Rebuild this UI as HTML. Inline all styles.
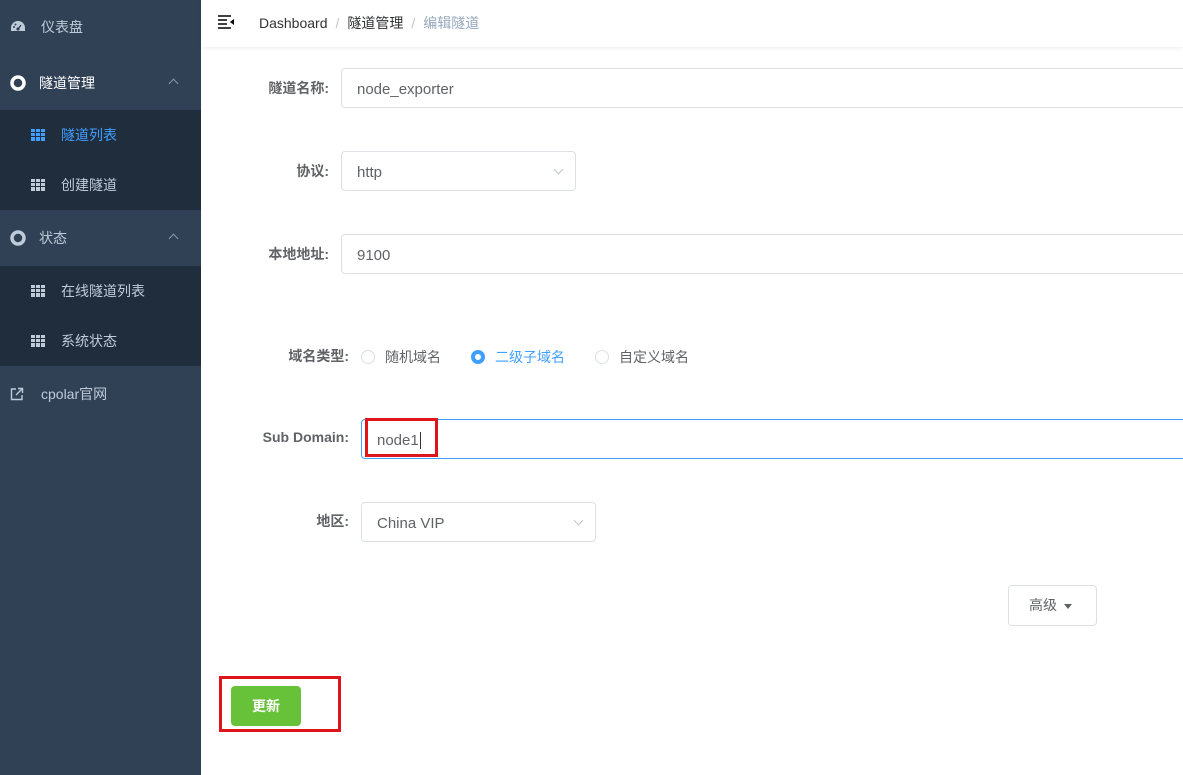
<!DOCTYPE html>
<html><head><meta charset="utf-8"><style>
*{box-sizing:border-box;margin:0;padding:0}
body{width:1183px;height:775px;overflow:hidden;font-family:"Liberation Sans","Noto Sans CJK SC",sans-serif;font-size:14px;background:#fff;position:relative}
.side{position:absolute;left:0;top:0;width:201px;height:775px;background:#304156}
.it{position:absolute;left:0;width:201px;color:#bfcbd9;font-size:14px;display:flex;align-items:center}
.sub{background:#1f2d3d}
.ico{position:absolute;left:10px}
.grid{position:absolute;left:31px;width:14px;height:12px;background:
linear-gradient(90deg,transparent 4px,#1f2d3d 4px,#1f2d3d 5px,transparent 5px,transparent 9px,#1f2d3d 9px,#1f2d3d 10px,transparent 10px),
linear-gradient(transparent 3px,#1f2d3d 3px,#1f2d3d 4px,transparent 4px,transparent 7px,#1f2d3d 7px,#1f2d3d 8px,transparent 8px),#bfcbd9}
.grid.a{background:linear-gradient(90deg,transparent 4px,#1f2d3d 4px,#1f2d3d 5px,transparent 5px,transparent 9px,#1f2d3d 9px,#1f2d3d 10px,transparent 10px),linear-gradient(transparent 3px,#1f2d3d 3px,#1f2d3d 4px,transparent 4px,transparent 7px,#1f2d3d 7px,#1f2d3d 8px,transparent 8px),#409eff}
.chev{position:absolute;left:170px;width:7px;height:7px;border-left:1px solid #8a97a8;border-top:1px solid #8a97a8;transform:rotate(45deg)}
.hdr{position:absolute;left:201px;top:0;right:0;height:47px;box-shadow:0 1px 4px rgba(0,21,41,.08);background:#fff}
.bc{position:absolute;left:58px;top:13px;font-size:14px;color:#303133}
.bc .s{color:#c0c4cc;margin:0 8px}
.lab{position:absolute;font-size:14px;color:#606266;font-weight:bold;text-align:right}
.inp{position:absolute;border:1px solid #dcdfe6;border-radius:4px;height:40px;color:#606266;padding-left:15px;line-height:41px;font-size:15px}
.arr{position:absolute;right:13px;top:14px;width:7px;height:7px;border-right:1px solid #c0c4cc;border-bottom:1px solid #c0c4cc;transform:rotate(45deg)}
.rad{position:absolute;top:350px;width:14px;height:14px;border:1px solid #dcdfe6;border-radius:50%}
.rt{position:absolute;top:347px;font-size:14px;color:#606266}
</style></head><body>
<div class="side">
 <div class="it" style="top:0;height:53px"><svg class="ico" width="16" height="14" viewBox="0 0 16 14"><path d="M8 1a7 7 0 0 0-7 7v3h14V8a7 7 0 0 0-7-7z" fill="#bfcbd9"/><circle cx="8" cy="9" r="1.6" fill="#304156"/><path d="M8 9l3-4" stroke="#304156" stroke-width="1.3"/><circle cx="4" cy="7" r="1" fill="#304156"/><circle cx="5.5" cy="4.5" r="1" fill="#304156"/></svg><span style="margin-left:41px">仪表盘</span></div>
 <div class="it" style="top:56px;height:54px;color:#fff"><svg class="ico" width="16" height="16" viewBox="0 0 16 16"><circle cx="8" cy="8" r="6" fill="none" stroke="#fff" stroke-width="3.5"/></svg><span style="margin-left:39px">隧道管理</span><div class="chev" style="top:24px"></div></div>
 <div class="it sub" style="top:110px;height:50px;color:#409eff"><div class="grid a"></div><span style="margin-left:61px">隧道列表</span></div>
 <div class="it sub" style="top:160px;height:50px"><div class="grid"></div><span style="margin-left:61px">创建隧道</span></div>
 <div class="it" style="top:210px;height:56px"><svg class="ico" width="16" height="16" viewBox="0 0 16 16"><circle cx="8" cy="8" r="6" fill="none" stroke="#bfcbd9" stroke-width="3.5"/></svg><span style="margin-left:39px">状态</span><div class="chev" style="top:25px"></div></div>
 <div class="it sub" style="top:266px;height:50px"><div class="grid"></div><span style="margin-left:61px">在线隧道列表</span></div>
 <div class="it sub" style="top:316px;height:50px"><div class="grid"></div><span style="margin-left:61px">系统状态</span></div>
 <div class="it" style="top:366px;height:56px"><svg class="ico" width="14" height="14" viewBox="0 0 14 14"><path d="M6 2H1.5v10.5H12V8M8 1.5h4.5V6M12.5 1.5L6 8" fill="none" stroke="#bfcbd9" stroke-width="1.4"/></svg><span style="margin-left:41px">cpolar官网</span></div>
</div>
<div class="hdr">
 <svg style="position:absolute;left:17px;top:15px" width="17" height="14" viewBox="0 0 17 14"><path d="M0 1h13M0 5h9M0 9h9M0 13h13" stroke="#000" stroke-width="1.6"/><path d="M16 4v6l-4-3z" fill="#000"/></svg>
 <div class="bc">Dashboard<span class="s">/</span>隧道管理<span class="s">/</span><span style="color:#97a8be">编辑隧道</span></div>
</div>
<div class="lab" style="left:240px;width:89px;top:78px">隧道名称:</div>
<div class="inp" style="left:341px;top:68px;width:860px">node_exporter</div>
<div class="lab" style="left:240px;width:89px;top:161px">协议:</div>
<div class="inp" style="left:341px;top:151px;width:235px">http<div class="arr"></div></div>
<div class="lab" style="left:240px;width:89px;top:244px">本地地址:</div>
<div class="inp" style="left:341px;top:234px;width:860px">9100</div>
<div class="lab" style="left:260px;width:89px;top:346px">域名类型:</div>
<div class="rad" style="left:361px"></div><div class="rt" style="left:385px">随机域名</div>
<div class="rad" style="left:471px;border:4px solid #409eff;background:#fff"></div><div class="rt" style="left:495px;color:#409eff">二级子域名</div>
<div class="rad" style="left:595px"></div><div class="rt" style="left:619px">自定义域名</div>
<div class="lab" style="left:250px;width:99px;top:429px">Sub Domain:</div>
<div class="inp" style="left:361px;top:419px;width:840px;border-color:#409eff">node1<span style="border-left:1px solid #333;margin-left:1px"></span></div>
<div style="position:absolute;left:365px;top:418px;width:73px;height:39px;border:3px solid #e0141b"></div>
<div class="lab" style="left:260px;width:89px;top:511px">地区:</div>
<div class="inp" style="left:361px;top:502px;width:235px">China VIP<div class="arr"></div></div>
<div style="position:absolute;left:1008px;top:585px;width:89px;height:41px;border:1px solid #dcdfe6;border-radius:4px;color:#606266;font-size:14px;line-height:39px;padding-left:20px">高级 <span style="display:inline-block;border:4px solid transparent;border-top:5px solid #606266;margin-left:3px;vertical-align:-3px"></span></div>
<div style="position:absolute;left:231px;top:686px;width:70px;height:40px;background:#67c23a;border-radius:4px;color:#fff;font-weight:bold;text-align:center;line-height:40px">更新</div>
<div style="position:absolute;left:219px;top:676px;width:122px;height:56px;border:3px solid #e0141b"></div>
</body></html>
